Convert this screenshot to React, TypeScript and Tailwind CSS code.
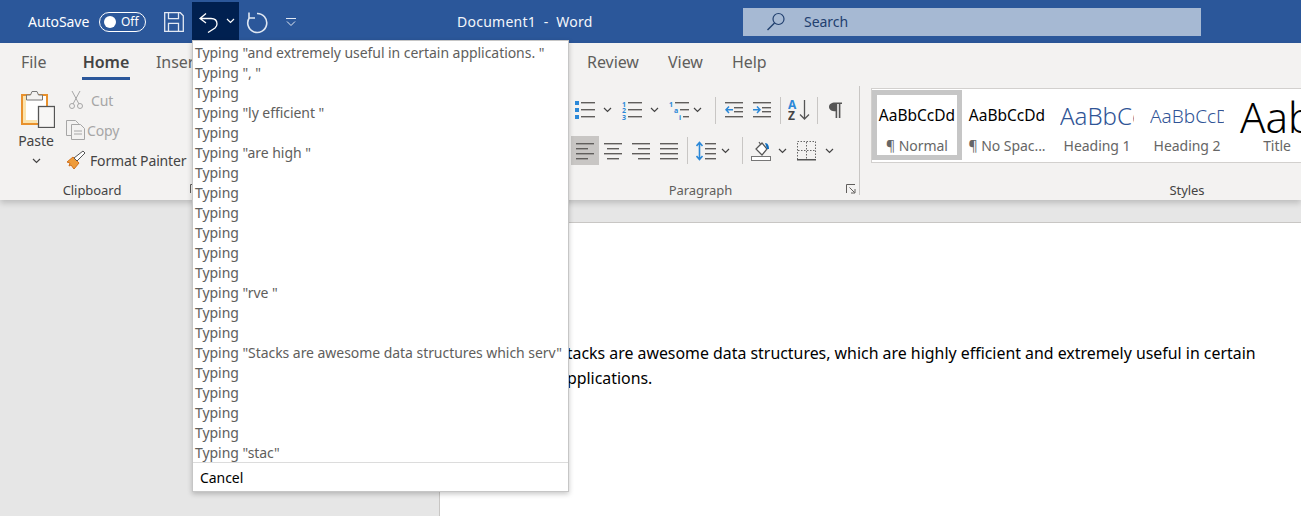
const lines = (rows: [number, number, number][], c = "#605e5c") => (
  <>{rows.map(([x, y, w], i) => <rect key={i} x={x} y={y} width={w} height={1.4} fill={c} />)}</>
);

function Chev({ className = "", c = "#444" }: { className?: string; c?: string }) {
  return (
    <svg width="9" height="6" viewBox="0 0 9 6" className={className}>
      <path d="M1 1l3.5 3.5L8 1" fill="none" stroke={c} strokeWidth="1.2" />
    </svg>
  );
}

function Sep({ className = "" }: { className?: string }) {
  return <div className={`w-px h-[27px] bg-[#c8c6c4] ${className}`} />;
}

function Icon({ w, h = 20, className = "", children }: { w: number; h?: number; className?: string; children: React.ReactNode }) {
  return <svg width={w} height={h} viewBox={`0 0 ${w} ${h}`} className={`shrink-0 ${className}`}>{children}</svg>;
}

const BLUE = "#2b88d8";

function Launcher({ className = "" }: { className?: string }) {
  return (
    <svg width="10" height="10" viewBox="0 0 10 10" className={className}>
      <path d="M.5 9V.5H9M3.500 3.500l5 5M5 9h4V5" fill="none" stroke="#605e5c" />
    </svg>
  );
}

function Paragraph() {
  return (
    <div className="w-[291px] shrink-0 h-full relative flex flex-col">
      <div className="absolute right-0 top-px bottom-[4px] w-px bg-[#c8c6c4]" />
      <div className="flex items-center h-[26px] mt-[12px] pl-[6px]">
        <Icon w={20} h={20}>
          <rect x="0" y="1" width="4" height="4" fill={BLUE} /><rect x="0" y="8" width="4" height="4" fill={BLUE} /><rect x="0" y="15" width="4" height="4" fill={BLUE} />
          {lines([[6, 2, 14], [6, 9, 14], [6, 16, 14]])}
        </Icon>
        <Chev className="ml-[8px]" />
        <Icon w={20} className="ml-[10px]">
          <text x="0" y="7" fontSize="7" fontFamily="Noto Sans" fontWeight="700" fill={BLUE}>1</text>
          <text x="0" y="13" fontSize="7" fontFamily="Noto Sans" fontWeight="700" fill={BLUE}>2</text>
          <text x="0" y="20" fontSize="7" fontFamily="Noto Sans" fontWeight="700" fill={BLUE}>3</text>
          {lines([[6, 2, 14], [6, 9, 14], [6, 16, 14]])}
        </Icon>
        <Chev className="ml-[8px]" />
        <Icon w={20} className="ml-[10px]">
          <text x="0" y="7" fontSize="7" fontFamily="Noto Sans" fontWeight="700" fill={BLUE}>1</text>
          <text x="5" y="13" fontSize="7" fontFamily="Noto Sans" fontWeight="700" fill={BLUE}>a</text>
          <text x="10" y="20" fontSize="7" fontFamily="Noto Sans" fontWeight="700" fill={BLUE}>i</text>
          {lines([[6, 2, 14], [11, 9, 9], [14, 16, 6]])}
        </Icon>
        <Chev className="ml-[4px]" />
        <Sep className="ml-[13px]" />
        <Icon w={18} className="ml-[9px]">
          {lines([[0, 2, 18], [9, 7, 9], [9, 11, 9], [0, 16, 18]])}
          <path d="M8 9.7H1M4 6.5L1 9.7l3 3.2" fill="none" stroke={BLUE} strokeWidth="1.5" />
        </Icon>
        <Icon w={18} className="ml-[10px]">
          {lines([[0, 2, 18], [9, 7, 9], [9, 11, 9], [0, 16, 18]])}
          <path d="M0 9.7h7M4 6.5l3 3.2-3 3.2" fill="none" stroke={BLUE} strokeWidth="1.5" />
        </Icon>
        <Sep className="ml-[9px]" />
        <Icon w={23} h={22} className="ml-[7px]">
          <text x="0" y="10" fontSize="12" fontFamily="Noto Sans" fontWeight="700" fill={BLUE}>A</text>
          <text x="0" y="21" fontSize="12" fontFamily="Noto Sans" fontWeight="700" fill="#444">Z</text>
          <path d="M16.5 1v19M12 15.5l4.5 4.5 4.5-4.5" fill="none" stroke="#555" strokeWidth="1.3" />
        </Icon>
        <Sep className="ml-[6px]" />
        <Icon w={13} h={16} className="ml-[11px]">
          <path d="M6 0.5h7v1.6h-1.6V16H9.8V2.1H8.2V16H6.6V9.3C2.8 9.3 0 7.6 0 4.9 0 2.2 2.6 0.5 6 0.5z" fill="#555" />
        </Icon>
      </div>
      <div className="flex items-center h-[29px] mt-[13px] pl-[2px]">
        <div className="w-[28px] h-[29px] bg-[#c8c6c4] flex items-center justify-center">
          <Icon w={18} h={18}>{lines([[0, 1, 18], [0, 6, 12], [0, 11, 18], [0, 16, 12]])}</Icon>
        </div>
        <Icon w={18} h={18} className="ml-[5px]">{lines([[0, 1, 18], [3, 6, 12], [0, 11, 18], [3, 16, 12]])}</Icon>
        <Icon w={18} h={18} className="ml-[10px]">{lines([[0, 1, 18], [6, 6, 12], [0, 11, 18], [6, 16, 12]])}</Icon>
        <Icon w={18} h={18} className="ml-[10px]">{lines([[0, 1, 18], [0, 6, 18], [0, 11, 18], [0, 16, 18]])}</Icon>
        <Sep className="ml-[9px]" />
        <Icon w={20} className="ml-[8px]">
          {lines([[9, 2, 11], [9, 7, 11], [9, 12, 11], [9, 17, 11]])}
          <path d="M3.5 2v16M0.5 5l3-3.5 3 3.5M0.5 15l3 3.5 3-3.5" fill="none" stroke={BLUE} strokeWidth="1.6" />
        </Icon>
        <Chev className="ml-[5px]" />
        <Sep className="ml-[12px]" />
        <Icon w={20} className="ml-[8px]">
          <path d="M5 8l6-6 5 6-5 6z" fill="#fff" stroke="#555" strokeWidth="1.2" />
          <path d="M8 1l2 3" stroke="#555" strokeWidth="1.2" />
          <path d="M14 2c3 0 4 3 4 6h-2z" fill="#106ebe" />
          <rect x="0.5" y="15.5" width="19" height="4" fill="#fff" stroke="#777" />
        </Icon>
        <Chev className="ml-[7px]" />
        <Icon w={20} className="ml-[10px]">
          <rect x="0.5" y="0.5" width="18" height="18" fill="none" stroke="#666" strokeDasharray="1.5 1.5" />
          <path d="M9.5 1v17M1 9.5h17" stroke="#666" strokeDasharray="1.5 1.5" />
          <rect x="0" y="18" width="19" height="1.5" fill="#555" />
        </Icon>
        <Chev className="ml-[8px]" />
      </div>
      <div className="mt-auto text-center text-[13px] leading-[18px] pr-[28px] text-[#605e5c]">Paragraph</div>
      <Launcher className="absolute right-[4px] bottom-[5px]" />
    </div>
  );
}

function StyleCard({ preview, label, cls, selected }: { preview: string; label: string; cls: string; selected?: boolean }) {
  return (
    <div className={`w-[90px] h-[70px] shrink-0 overflow-hidden flex flex-col items-center border-[5px] ${selected ? "border-[#c6c6c6]" : "border-transparent"}`}>
      <div className={`h-[40px] mt-px shrink-0 flex items-center whitespace-nowrap tracking-normal ${cls}`}>{preview}</div>
      <div className="text-[14px] leading-[19px] text-[#666] whitespace-nowrap">{label}</div>
    </div>
  );
}

const items = [
  'Typing "and extremely useful in certain applications. "', 'Typing ", "', "Typing", 'Typing "ly efficient "', "Typing", 'Typing "are high "',
  "Typing", "Typing", "Typing", "Typing", "Typing", "Typing", 'Typing "rve "', "Typing", "Typing",
  'Typing "Stacks are awesome data structures which serv"', "Typing", "Typing", "Typing", "Typing", 'Typing "stac"',
];

export default function App() {
  return (
    <div className="relative w-[1301px] h-[516px] overflow-hidden bg-[#e6e6e6] font-['Noto_Sans',sans-serif] tracking-[-0.05px]">
      {/* title bar */}
      <header className="h-[43px] bg-[#2b579a] flex items-center text-white text-[14px]">
        <span className="ml-[28px] w-[71px]">AutoSave</span>
        <div className="w-[47px] h-[20px] border border-white rounded-full flex items-center pl-[4px]">
          <span className="w-[12px] h-[12px] rounded-full bg-white" />
          <span className="ml-[5px] text-[12px]">Off</span>
        </div>
        <svg width="20" height="20" viewBox="0 0 20 20" className="ml-[18px] mt-[1px] shrink-0">
          <path d="M.7.7h15.600l3 3v15.600H.7zM4.500.7v6h10v-6M4.500 19.300v-8h10v8" fill="none" stroke="#e3e9f3" strokeWidth="1.300" />
        </svg>
        <div className="ml-[8px] w-[47px] h-[38px] self-start mt-[2px] bg-[#002050] flex items-center pl-[7px]">
          <svg width="20" height="20" viewBox="0 0 20 20" className="shrink-0 mt-[4px]">
            <path d="M7 .5L1 5.500l6 4.500M1 5.500h11c4 0 6 2.500 6 5.500 0 1.800-1 3-2 4l-7 4.500" fill="none" stroke="#fff" strokeWidth="1.300" />
          </svg>
          <Chev className="ml-[7px]" c="#fff" />
        </div>
        <svg width="22" height="22" viewBox="0 0 22 22" className="ml-[7px] mt-[3px] shrink-0">
          <path d="M11 1.500A9.500 9.500 0 1 1 3.500 5.500M3 .5V6h6" fill="none" stroke="#dfe7f2" strokeWidth="1.600" />
        </svg>
        <svg width="12" height="9" viewBox="0 0 12 9" className="ml-[17px] mt-[1px] shrink-0">
          <path d="M1 .5h10M2 3.500l4 4 4-4" fill="none" stroke="#e3e9f3" />
        </svg>
        <span className="ml-[160px] w-[286px] whitespace-pre text-[14px] tracking-[0.25px] text-[#f3f6fa]">Document1  -  Word</span>
        <div className="w-[458px] h-[28px] bg-[#a6b9d3] flex items-center pl-[23px] text-[14px] text-[#22406f]">
          <svg width="20" height="20" viewBox="0 0 20 20" className="shrink-0">
            <circle cx="12.500" cy="7" r="5.500" fill="none" stroke="#22406f" strokeWidth="1.200" />
            <path d="M8.500 11L1.500 18" stroke="#22406f" strokeWidth="1.500" />
          </svg>
          <span className="ml-[18px]">Search</span>
        </div>
      </header>

      {/* ribbon */}
      <div className="h-[157px] bg-[#f3f2f1] shadow-[0_3px_6px_rgba(0,0,0,0.18)] relative flex flex-col text-[#444]">
        <nav className="h-[37px] flex items-center text-[16px] text-[#605e5c] shrink-0">
          <span className="ml-[21px] w-[61px]">File</span>
          <span className="w-[48px] h-[37px] flex items-center justify-center font-semibold text-[#444] relative">
            Home
            <span className="absolute left-0 right-0 bottom-0 h-[3px] bg-[#2b579a]" />
          </span>
          <span className="ml-[26px] w-[431px]">Insert</span>
          <span className="w-[81px]">Review</span>
          <span className="w-[64px]">View</span>
          <span>Help</span>
        </nav>
        <div className="flex-1 flex min-h-0 pt-[5px] pb-[1px]">
          {/* clipboard */}
          <div className="w-[189px] shrink-0 flex flex-col">
            <div className="flex flex-1 min-h-0">
              <div className="w-[62px] shrink-0 flex flex-col items-center pl-[10px] pt-[5px]">
                <svg width="34" height="38" viewBox="0 0 34 38" className="shrink-0 ml-[4px]">
                  <rect x="1" y="5" width="25" height="29" fill="#fff" stroke="#e8912d" strokeWidth="2" />
                  <path d="M2 6h3v24h11v3H2z" fill="#fbe3ae" />
                  <path d="M5.500 10V5h4l1.500-3.500h5L17.500 5h4v5z" fill="#f3f2f1" stroke="#777" />
                  <rect x="17.500" y="16.500" width="16" height="21" fill="#f7f6f5" stroke="#555" strokeWidth="1.300" />
                </svg>
                <span className="text-[14px] leading-[20px] mt-[3px]">Paste</span>
                <Chev className="mt-[7px]" />
              </div>
              <div className="flex flex-col text-[14px] tracking-[-0.15px]">
                <div className="h-[30px] flex items-center text-[#a6a6a6]">
                  <svg width="20" height="20" viewBox="0 0 20 20" className="ml-[4px] shrink-0">
                    <path d="M6 1l7 13M14 1L7 14" stroke="#a6a6a6" fill="none" />
                    <circle cx="6" cy="16" r="2.500" fill="none" stroke="#a6a6a6" /><circle cx="14" cy="16" r="2.500" fill="none" stroke="#a6a6a6" />
                  </svg>
                  <span className="ml-[5px]">Cut</span>
                </div>
                <div className="h-[30px] flex items-center text-[#a6a6a6]">
                  <svg width="20" height="20" viewBox="0 0 20 20" className="ml-[4px] shrink-0">
                    <path d="M5.500 15.500H.5V.5h9l3 3v1" fill="#f3f2f1" stroke="#a6a6a6" />
                    <path d="M5.500 4.500h9l4 4v11h-13z" fill="#f3f2f1" stroke="#a6a6a6" />
                    <path d="M8 11h8M8 14h8" stroke="#a6a6a6" />
                  </svg>
                  <span className="ml-[1px]">Copy</span>
                </div>
                <div className="h-[30px] flex items-center whitespace-nowrap">
                  <svg width="20" height="20" viewBox="0 0 20 20" className="ml-[4px] shrink-0">
                    <path d="M1 12l6-5 6 6-5 6-3-4-2 1 1-3z" fill="#ee9b3a" stroke="#d0701c" />
                    <path d="M8 8l3 3 8-8-2-2z" fill="#fff" stroke="#555" />
                  </svg>
                  <span className="ml-[4px]">Format Painter</span>
                </div>
              </div>
            </div>
            <div className="text-center text-[13px] leading-[18px] pr-[5px]">Clipboard</div>
          </div>
          {/* font group: hidden under menu */}
          <div className="w-[380px] shrink-0 flex flex-col">
            <Launcher className="mt-auto ml-px mb-[5px]" />
          </div>
          <Paragraph />
          {/* styles */}
          <div className="flex-1 min-w-0 pl-[11px] pt-[3px] flex flex-col">
            <div className="h-[75px] w-[441px] bg-white border border-[#d2d0ce] pt-px flex shrink-0">
              <StyleCard selected preview="AaBbCcDd" label="¶ Normal" cls="text-[15.500px] text-black" />
              <StyleCard preview="AaBbCcDd" label="¶ No Spac..." cls="text-[15.500px] text-black" />
              <StyleCard preview="AaBbCc" label="Heading 1" cls="text-[24px] text-[#2f5496] font-light w-[74px] overflow-hidden" />
              <StyleCard preview="AaBbCcD" label="Heading 2" cls="text-[19px] text-[#2f5496] font-light w-[74px] overflow-hidden" />
              <StyleCard preview="Aab" label="Title" cls="text-[42px] text-black font-light w-[74px] overflow-visible" />
            </div>
            <div className="mt-auto text-[13px] leading-[18px] text-center w-[632px]">Styles</div>
          </div>
        </div>
      </div>

      {/* document */}
      <div className="mt-[22px] ml-[439px] h-[294px] border-l border-t border-[#c8c6c4] bg-white pl-[118px] pt-[118px] pr-[30px] text-[15.900px] tracking-normal leading-[25px] text-black">
        Stacks are awesome data structures, which are highly efficient and extremely useful in certain applications.
      </div>

      {/* undo menu */}
      <div className="absolute left-[192px] top-[40px] w-[377px] h-[452px] bg-white border border-[#c6c6c6] shadow-[0_2px_5px_rgba(0,0,0,0.22)] pt-[2px] flex flex-col text-[14px]">
        {items.map((t, i) => (
          <div key={i} className="h-[20px] shrink-0 leading-[20px] pl-[2px] text-[#605e5c] whitespace-nowrap">{t}</div>
        ))}
        <div className="border-t border-[#dcdcdc] mt-[-1px] h-[30px] leading-[30px] pl-[7px] text-black">Cancel</div>
      </div>
    </div>
  );
}
